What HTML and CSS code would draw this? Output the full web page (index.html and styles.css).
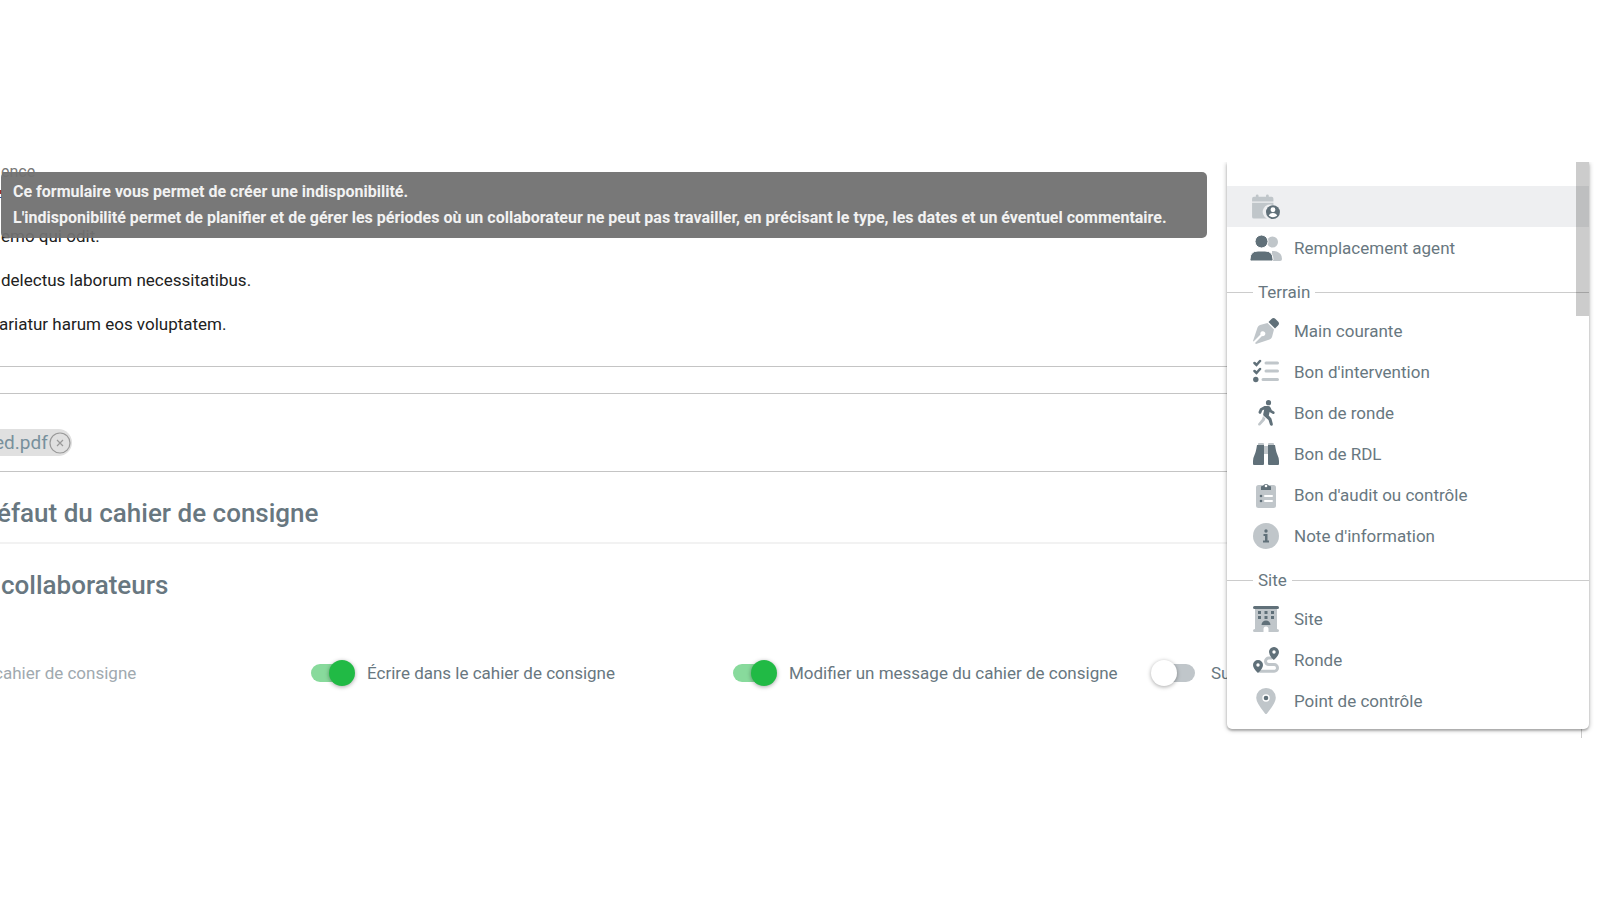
FILE: index.html
```html
<!DOCTYPE html>
<html lang="fr">

<head>
  <meta charset="UTF-8">
  <meta name="viewport" content="width=device-width, initial-scale=1.0">
  <title>Cahier de consigne</title>
  <link rel="stylesheet" href="styles.css">
</head>

<body>
  <div class="screen">
    <main class="content">
      <section class="message">
        <p class="message-label">ence</p>
        <p class="message-mark"></p>
        <p>emo qui odit.</p>
        <p>delectus laborum necessitatibus.</p>
        <p class="message-cut">ariatur harum eos voluptatem.</p>
      </section>
      <div class="spacer"></div>
      <section class="files">
        <span class="chip">ed.pdf
          <button class="chip-remove" type="button" aria-label="Supprimer">
            <svg viewBox="0 0 22 22"><circle cx="11" cy="11" r="10" /><path d="M8 8l6 6M14 8l-6 6" /></svg>
          </button>
        </span>
      </section>
      <h2 class="title title-main">éfaut du cahier de consigne</h2>
      <h2 class="title">collaborateurs</h2>
      <div class="rights">
        <div class="right-item disabled">cahier de consigne</div>
        <div class="right-item">
          <input class="switch" type="checkbox" id="right-write" checked>
          <label for="right-write">Écrire dans le cahier de consigne</label>
        </div>
        <div class="right-item">
          <input class="switch" type="checkbox" id="right-edit" checked>
          <label for="right-edit">Modifier un message du cahier de consigne</label>
        </div>
        <div class="right-item">
          <input class="switch" type="checkbox" id="right-delete">
          <label for="right-delete">Su</label>
        </div>
      </div>
    </main>

    <div class="tooltip" role="tooltip">
      Ce formulaire vous permet de créer une indisponibilité.<br>
      L'indisponibilité permet de planifier et de gérer les périodes où un collaborateur ne peut pas travailler, en précisant le type, les dates et un éventuel commentaire.
    </div>

    <!-- menu de création -->
    <nav class="menu">
      <button class="menu-item active" type="button" aria-label="Indisponibilité">
        <svg class="icon wide" viewBox="0 0 32 28">
          <path class="light" d="M1 8V5q0-2 2-2h2V2q0-1.500 1.500-1.500T8 2v1h8V2q0-1.500 1.500-1.500T19 2v1h3q2 0 2 2v3zM1 9.500h23V12a8 8 0 0 0-7 14.500H3q-2 0-2-2z" />
          <circle class="dark" cx="23.500" cy="19.500" r="7.500" />
          <circle class="hole" cx="23.500" cy="17" r="2.600" />
          <path class="hole" d="M19 23.500q1-3 4.500-3t4.500 3q-4.500 3-9 0z" />
        </svg>
      </button>
      <button class="menu-item" type="button">
        <svg class="icon wide" viewBox="0 0 32 26">
          <circle class="light" cx="22.500" cy="7" r="5.500" />
          <path class="light" d="M22 16h2q8 1 8 8 0 2-2 2h-8z" />
          <circle class="halo" cx="11.500" cy="6.500" r="6.500" />
          <path class="halo" d="M0 24.500Q0 16 8 16h7q8 0 8 8.500 0 1.500-1.500 1.500h-20Q0 26 0 24.500z" />
        </svg>
        Remplacement agent
      </button>

      <div class="menu-divider">Terrain</div>
      <button class="menu-item" type="button">
        <svg class="icon" viewBox="0 0 26 26">
          <path class="light" d="M14.500 5L21 11.500l-2 7.500q-.5 1.800-2.500 2.500L3 26l-1-1 7-7a2.500 2.500 0 1 0-1.500-1.500l-7 7L0 23 4.500 9.500Q5.200 7.500 7 7z" />
          <path class="dark" d="M15.500 4l3-3q2-2 4 0L25 3.500q2 2 0 4l-3 3z" />
        </svg>
        Main courante
      </button>
      <button class="menu-item" type="button">
        <svg class="icon" viewBox="0 0 26 26">
          <path class="light-line" d="M13 4h11.500M13 12h11.500M10 20.500h14.500" />
          <path class="dark-line" d="M1.500 4l2 2L7 2M1.500 12l2 2L7 10" />
          <circle class="dark" cx="2.800" cy="20.500" r="2.700" />
        </svg>
        Bon d'intervention
      </button>
      <button class="menu-item" type="button">
        <svg class="icon" viewBox="0 0 26 26">
          <path class="light" d="M10 16l2.500 2.500-.8 2L7 25.500q-2 .5-2-1.500L9 19z" />
          <circle class="dark" cx="15.500" cy="2.700" r="2.600" />
          <path class="dark" d="M11.500 6h3.800q1.800.2 2.500 2l1 2.300 2.200 1.200q1.200 1 .2 2.200-.6.600-1.600.1l-3-1.700-.8 3.400 2.600 3 1.500 5.700q-.1 1.700-1.700 1.600-1-.1-1.300-1.200L15.500 20l-4.800-4.200q-.7-.8-.4-2l.9-4.200-2 1L8.300 13q-.7 1.200-1.900.7-1.200-.6-.8-2L7 8.500z" />
        </svg>
        Bon de ronde
      </button>
      <button class="menu-item" type="button">
        <svg class="icon" viewBox="0 0 26 26">
          <path class="light" d="M5 3V2.500Q5 2 6 2h4q1 0 1 1v1H5zM15 4V3q0-1 1-1h4q1 0 1 1v1zM11 5h4v8h-4z" />
          <path class="dark" d="M4 4h7v19q0 1-1 1H1q-1 0-1-1v-3q0-3 1.500-6T4 4zM15 4h7q1 7 2.500 10t1.500 6v3q0 1-1 1h-9q-1 0-1-1z" />
        </svg>
        Bon de RDL
      </button>
      <button class="menu-item" type="button">
        <svg class="icon" viewBox="0 0 26 26">
          <rect class="light" x="3" y="3" width="20" height="23" rx="2.500" />
          <path class="dark" d="M8 8V5q0-1 1-1h1a3.200 3.200 0 0 1 6 0h1q1 0 1 1v3z" />
          <circle class="hole" cx="13" cy="4" r="1.300" />
          <circle class="dark" cx="8" cy="14" r="1.300" /><circle class="dark" cx="8" cy="19" r="1.300" />
          <path class="hole-line" d="M12 14h7M12 19h7" />
        </svg>
        Bon d'audit ou contrôle
      </button>
      <button class="menu-item" type="button">
        <svg class="icon" viewBox="0 0 26 26">
          <circle class="light" cx="13" cy="13" r="13" />
          <circle class="dark" cx="13" cy="8" r="1.700" />
          <path class="dark" d="M10.500 11h4v6.500H16v2h-6v-2h2V13h-1.500z" />
        </svg>
        Note d'information
      </button>

      <div class="menu-divider">Site</div>
      <button class="menu-item" type="button">
        <svg class="icon" viewBox="0 0 26 26">
          <path class="light" d="M2 3h22v20q2 0 2 1.500T24.500 26H15.500v-3a2.500 2.500 0 0 0-5 0v3h-9Q0 26 0 24.500T2 23z" />
          <rect class="dark" x="0" y="0" width="26" height="3" rx="1.500" />
          <path class="dark" d="M5 5h3v3H5zM11.500 5h3v3h-3zM18 5h3v3h-3zM5 10h3v3H5zM11.500 10h3v3h-3zM18 10h3v3h-3zM8.500 19a4.500 4.500 0 0 1 9 0z" />
        </svg>
        Site
      </button>
      <button class="menu-item" type="button">
        <svg class="icon" viewBox="0 0 26 26">
          <path class="route" d="M18.500 11h-2.700a3.300 3.300 0 0 0 0 6.600h5.400a3.300 3.300 0 0 1 0 6.600H7" />
          <path class="dark" d="M20.800 0A5 5 0 0 1 26 5q0 3.500-5.200 8Q16 8.500 16 5a5 5 0 0 1 4.800-5zM5 13a5 5 0 0 1 5 5q0 3.500-5 8-5-4.500-5-8a5 5 0 0 1 5-5z" />
          <circle class="hole" cx="21" cy="5" r="1.700" /><circle class="hole" cx="5" cy="18" r="1.700" />
        </svg>
        Ronde
      </button>
      <button class="menu-item" type="button">
        <svg class="icon" viewBox="0 0 26 26">
          <path class="light" d="M13 0a9.800 9.800 0 0 1 9.800 9.800q0 5-8.800 15.700-1 1-2 0Q3.200 14.800 3.200 9.800A9.800 9.800 0 0 1 13 0z" />
          <circle class="hole" cx="13" cy="10" r="3.700" />
          <circle class="dark" cx="13" cy="10" r="2.300" />
        </svg>
        Point de contrôle
      </button>
      <span class="menu-scroll"></span>
    </nav>
  </div>
</body>

</html>
```

FILE: styles.css
```css
* {
  box-sizing: border-box;
}

body {
  margin: 0;
  padding: 162px 0;
  font-family: Roboto, "Liberation Sans", sans-serif;
  font-size: 17px;
  color: #687780;
  background-color: #fff;
}

.screen {
  position: relative;
  overflow: hidden;
}

.content {
  margin-right: 18px;
  border-right: 1px solid #ccc;
}

/* Message */
.message {
  height: 205px;
  border-bottom: 1px solid #c4c4c4;
  color: #212121;
}

.message p {
  margin: 0 0 20px 1px;
  line-height: 24px;
}

.message .message-label {
  margin-bottom: 8px;
  line-height: 20px;
  color: #777;
  font-size: 16px;
}

.message .message-mark {
  width: 2px;
  height: 8px;
  margin: 0 0 26px;
  border-top: 4px solid #a03030;
  border-bottom: 1px solid #1e4fb0;
}

.message .message-cut {
  margin-left: -1px;
}

.spacer {
  height: 27px;
  border-bottom: 1px solid #c4c4c4;
}

/* Fichiers */
.files {
  height: 78px;
  padding-top: 35px;
  border-bottom: 1px solid #c4c4c4;
}

.chip {
  display: inline-flex;
  align-items: center;
  gap: 1px;
  height: 27px;
  margin-left: -6px;
  padding-right: 1px;
  border-radius: 0 14px 14px 0;
  background-color: #e0e0e0;
  color: #78909c;
  font-size: 19px;
}

.chip-remove {
  display: flex;
  width: 22px;
  height: 22px;
  padding: 0;
  border: none;
  background: none;
  cursor: pointer;
}

.chip-remove svg {
  fill: none;
  stroke: #999;
  stroke-width: 1.2;
}

.title {
  margin: 0;
  padding: 23px 0 0 1px;
  line-height: 36px;
  font-size: 26px;
  font-weight: 500;
}

.title-main {
  height: 72px;
  margin-left: -4px;
  border-bottom: 2px solid #f2f2f2;
}

/* Droits */
.rights {
  display: grid;
  grid-template-columns: 311px repeat(3, 1fr);
  margin-right: 4px;
  padding: 57px 0 52px;
}

.right-item {
  display: flex;
  align-items: center;
  gap: 16px;
  height: 26px;
  white-space: nowrap;
}

.disabled {
  margin-left: -6px;
  color: #a0a9af;
}

.switch {
  appearance: none;
  position: relative;
  width: 40px;
  height: 18px;
  margin: 0;
  border-radius: 9px;
  background-color: #c0c6ca;
  cursor: pointer;
}

.switch::before {
  content: "";
  position: absolute;
  top: -4px;
  left: -4px;
  width: 26px;
  height: 26px;
  border-radius: 50%;
  background-color: #fff;
  box-shadow: 0 1px 4px rgba(0, 0, 0, 0.35);
}

.switch:checked {
  background-color: #88da9c;
}

.switch:checked::before {
  left: 18px;
  background-color: #21ba45;
}

.tooltip {
  position: absolute;
  top: 10px;
  left: 1px;
  right: 393px;
  padding: 7px 12px;
  border-radius: 5px;
  background-color: rgba(113, 113, 113, 0.95);
  color: #f2f2f2;
  line-height: 26px;
  font-size: 16px;
  font-weight: 700;
  white-space: nowrap;
}

/* Menu */
.menu {
  position: absolute;
  top: 0;
  right: 11px;
  width: 362px;
  padding: 24px 0 8px;
  border-radius: 0 0 5px 5px;
  background-color: #fff;
  box-shadow: 0 1px 5px rgba(0, 0, 0, 0.3), 0 2px 2px rgba(0, 0, 0, 0.18);
}

.menu-item {
  display: flex;
  align-items: center;
  gap: 15px;
  width: 100%;
  height: 41px;
  padding: 0 26px;
  border: none;
  background: none;
  color: inherit;
  font: inherit;
  text-align: left;
  cursor: pointer;
}

.menu-item.active {
  background-color: #eeeff1;
}

.menu-divider {
  display: flex;
  align-items: center;
  gap: 5px;
  padding: 14px 0 8px;
  line-height: 20px;
}

.menu-divider::before,
.menu-divider::after {
  content: "";
  width: 26px;
  height: 1px;
  background-color: #ccc;
}

.menu-divider::after {
  flex: 1;
}

.menu-scroll {
  position: absolute;
  top: 0;
  right: 0;
  width: 13px;
  height: 154px;
  background-color: rgba(0, 0, 0, 0.2);
}

/* Icones */
.icon {
  flex: none;
  width: 26px;
  height: 26px;
}

.icon.wide {
  width: 32px;
  margin: 0 -3px;
}

.light {
  fill: #c0c6ca;
}

.dark {
  fill: #607079;
}

.hole {
  fill: #fff;
}

.halo {
  fill: #607079;
  stroke: #fff;
  stroke-width: 1;
}

.light-line,
.dark-line,
.hole-line,
.route {
  fill: none;
  stroke-width: 3;
  stroke-linecap: round;
}

.light-line,
.route {
  stroke: #c0c6ca;
}

.dark-line {
  stroke: #607079;
  stroke-width: 2.5;
}

.hole-line {
  stroke: #fff;
  stroke-width: 2;
}
```
